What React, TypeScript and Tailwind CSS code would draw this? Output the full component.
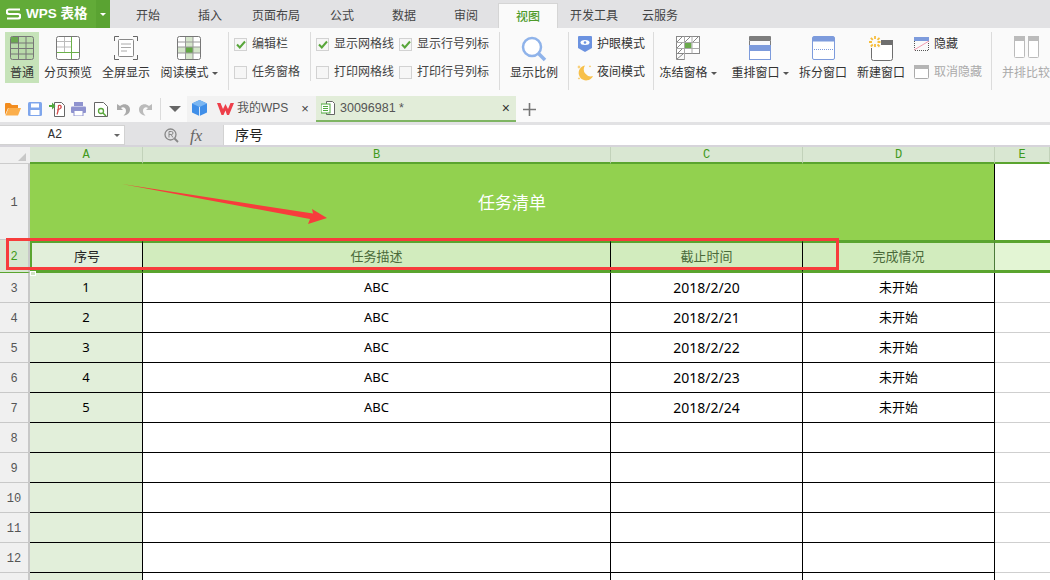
import React from "react";

const CJK = "font-['Liberation_Sans','Noto_Sans_CJK_SC',sans-serif]";

function S({ w, h, children, className = "" }: { w: number; h: number; children: React.ReactNode; className?: string }) {
  return (
    <svg width={w} height={h} viewBox={`0 0 ${w} ${h}`} className={`block shrink-0 ${className}`} fill="none">
      {children}
    </svg>
  );
}

const Caret = ({ c = "#555" }: { c?: string }) => (
  <svg width="6" height="3" viewBox="0 0 6 3" className="inline-block ml-[3px] align-middle"><path d="M0 0h6L3 3z" fill={c} /></svg>
);

function IconNormal() {
  return (
    <S w={24} h={24}>
      <rect x=".5" y=".5" width="23" height="23" rx="2" fill="#b9dbaa" stroke="#777" />
      <rect x="1" y="1" width="8" height="6" fill="#6aa84f" />
      <path d="M8.5 1v22M16 1v22M1 7h22M1 12.5h22M1 18h22" stroke="#777" />
    </S>
  );
}
function IconPage() {
  return (
    <S w={24} h={24}>
      <rect x=".5" y=".5" width="23" height="23" rx="2" fill="#fff" stroke="#777" />
      <path d="M8.5 1v15M1 5.5h15M1 11h15" stroke="#bbb" />
      <path d="M15.5 1v22M1 16.5h22" stroke="#6bb04a" />
    </S>
  );
}
function IconFull() {
  return (
    <S w={24} h={24}>
      <path d="M.5 5V.5H5M19 .5h4.500V5M23.500 19v4.500H19M5 23.500H.5V19" stroke="#666" />
      <rect x="4.500" y="3.500" width="15" height="17" rx="1" stroke="#888" fill="#fff" />
      <path d="M7 8h10M7 11.500h10M7 15h6" stroke="#aaa" />
    </S>
  );
}
function IconRead() {
  return (
    <S w={24} h={24}>
      <rect x=".5" y=".5" width="23" height="23" rx="2" fill="#fff" stroke="#777" />
      <rect x="8" y="1" width="8" height="22" fill="#d5e6cb" />
      <rect x="1" y="11" width="22" height="6" fill="#d5e6cb" />
      <rect x="8.500" y="11" width="7.500" height="6" fill="#62a744" />
      <path d="M8.500 1v22M16 1v22M1 6h22M1 11h22M1 17h22" stroke="#999" />
    </S>
  );
}
function Check({ on }: { on?: boolean }) {
  return (
    <span className="w-[13px] h-[13px] border border-[#d2d2d2] bg-[#f6f6f6] shrink-0 flex items-center justify-center">
      {on && (
        <svg width="10" height="9" viewBox="0 0 10 9"><path d="M1 4.500L3.800 7.500L9 1.500" stroke="#58a63a" strokeWidth="2" fill="none" /></svg>
      )}
    </span>
  );
}
function IconZoom() {
  return (
    <S w={26} h={26}>
      <circle cx="11" cy="11" r="9" stroke="#8fb3ea" strokeWidth="2.500" fill="#fff" />
      <path d="M17.500 17.500L24 24" stroke="#8fb3ea" strokeWidth="3.500" />
    </S>
  );
}
function IconEye() {
  return (
    <S w={14} h={16}>
      <path d="M1 0h12a1 1 0 011 1v11l-7 4-7-4V1a1 1 0 011-1z" fill="#6b92e0" />
      <ellipse cx="7" cy="6.500" rx="4.500" ry="2.500" fill="#fff" />
      <circle cx="7" cy="6.500" r="1.300" fill="#6b92e0" />
    </S>
  );
}
function IconMoon() {
  return (
    <S w={16} h={17}>
      <path d="M8 1.500a7.500 7.500 0 108 10.500 7 7 0 01-8-10.500z" fill="#f7c04a" />
      <path d="M2 1l.6 1.400L4 3l-1.400.6L2 5l-.6-1.400L0 3l1.400-.6zM2 13l.4 1 1 .4-1 .4-.4 1-.4-1-1-.4 1-.4zM13 1l.4.900.9.400-.9.400-.4.900-.4-.9-.9-.4.900-.4z" fill="#f7c04a" />
    </S>
  );
}
function IconFreeze() {
  return (
    <S w={24} h={24}>
      <rect x=".5" y=".5" width="23" height="17" fill="#fff" stroke="#888" />
      <path d="M23.500.5v17H8.500v6h-8V.5" stroke="#888" />
      <rect x="8.500" y="6.500" width="7" height="6" fill="#6aaa4c" />
      <path d="M.5 6.500h23M.5 12.500h23M8.500.5v23M16 .5v17" stroke="#aaa" />
      <path d="M1 6L6 1M9 6l5-5M17 6l5-5M1 12l5-5M1 18l5-5M1 23l6-5" stroke="#888" />
    </S>
  );
}
function IconArrange() {
  return (
    <S w={22} h={24}>
      <rect x="0" y="0" width="22" height="5" rx="1" fill="#7d7d7d" />
      <path d="M.5 5v4M21.500 5v4" stroke="#7d7d7d" />
      <rect x=".5" y="9.500" width="21" height="14" fill="#fff" stroke="#7d9bdc" />
      <rect x="1" y="10" width="20" height="5" fill="#7d9bdc" />
    </S>
  );
}
function IconSplit() {
  return (
    <S w={23} h={24}>
      <rect x=".5" y=".5" width="22" height="23" rx="1.500" fill="#fff" stroke="#7d9bdc" />
      <rect x="1" y="1" width="21" height="4.500" fill="#7d9bdc" />
      <path d="M2 13.500h19" stroke="#7d9bdc" strokeDasharray="1 1" />
    </S>
  );
}
function IconNew() {
  return (
    <S w={24} h={25}>
      <rect x="2.500" y="4.500" width="21" height="20" rx="2" fill="#fff" stroke="#6e6e6e" />
      <rect x="12" y="4" width="12" height="5" fill="#6e6e6e" />
      <rect x="0" y="0" width="12" height="12" fill="#fafafa" />
      <path d="M6 0v3M6 8v3M0 6h3M8.500 6h3M1.800 1.800l2 2M8.500 8.500l2 2M10.500 1.800l-2 2M3.800 8.500l-2 2" stroke="#f6bd3c" strokeWidth="1.800" />
    </S>
  );
}
function IconHide() {
  return (
    <S w={15} h={14}>
      <path d="M.5 4v9.500h14V4" stroke="#555" strokeDasharray="1 1" />
      <rect x="0" y="0" width="15" height="4" fill="#7d9bdc" />
      <path d="M0 13L15 4" stroke="#f29bb0" />
    </S>
  );
}
function IconUnhide() {
  return (
    <S w={15} h={14}>
      <rect x=".5" y=".5" width="14" height="13" rx="1" fill="#fff" stroke="#aaa" />
      <rect x="0" y="0" width="15" height="4" fill="#b5b5b5" />
    </S>
  );
}
function IconCompare() {
  return (
    <S w={25} h={22}>
      <rect x=".5" y=".5" width="10" height="21" rx="1" fill="#fff" stroke="#bbb" />
      <rect x="14.500" y=".5" width="10" height="21" rx="1" fill="#fff" stroke="#bbb" />
      <rect x="0" y="0" width="11" height="5" fill="#bbb" />
      <rect x="14" y="0" width="11" height="5" fill="#bbb" />
    </S>
  );
}

function BigBtn({ w, icon, label, caret, active, muted }: { w: number; icon: React.ReactNode; label: string; caret?: boolean; active?: boolean; muted?: boolean }) {
  return (
    <div style={{ width: w }} className={`shrink-0 h-[51px] flex flex-col items-center whitespace-nowrap pt-[4px] ${active ? "bg-[#c6e3b9]" : ""}`}>
      <div className="h-[26px] flex items-start justify-center">{icon}</div>
      <div className={`mt-[3px] text-[12px] leading-[16px] ${muted ? "text-[#aaa]" : "text-[#333]"}`}>
        {label}
        {caret && <Caret />}
      </div>
    </div>
  );
}
const Sep = ({ ml = 0, mr = 0 }: { ml?: number; mr?: number }) => (
  <div style={{ marginLeft: ml, marginRight: mr }} className="w-[1px] h-[58px] bg-[#dcdcdc] shrink-0" />
);
function CheckItem({ on, label }: { on?: boolean; label: string }) {
  return (
    <div className="flex items-center gap-[5px] h-[16px] text-[12px] leading-[16px] text-[#444] whitespace-nowrap">
      <Check on={on} />
      <span>{label}</span>
    </div>
  );
}
function SmallItem({ icon, label, muted }: { icon: React.ReactNode; label: string; muted?: boolean }) {
  return (
    <div className={`flex items-center h-[16px] text-[12px] leading-[16px] whitespace-nowrap ${muted ? "text-[#aaa]" : "text-[#333]"}`}>
      <div className="w-[15px] flex justify-center shrink-0">{icon}</div>
      <span className="ml-[5px]">{label}</span>
    </div>
  );
}

function TitleBar() {
  return (
    <div className="h-[28px] flex bg-[#e2e2e4] items-stretch">
      <div className="w-[96px] bg-[#62ab38] flex items-center pl-[6px] text-white gap-[5px] font-bold whitespace-nowrap">
        <svg width="15" height="12" viewBox="0 0 15 12" className="shrink-0"><path d="M14 1.500H3a1.700 1.700 0 000 4.500h9a1.700 1.700 0 010 4.500H1" stroke="#fff" strokeWidth="2.200" fill="none" /></svg>
        <span className="text-[13.500px] leading-[16px]">WPS 表格</span>
      </div>
      <div className="w-[14px] bg-[#5aa332] flex items-center justify-center">
        <svg width="6" height="3" viewBox="0 0 6 3"><path d="M0 0h6L3 3z" fill="#fff" /></svg>
      </div>
      <div className="flex items-center text-[12px] text-[#444] ml-[26px] pt-[4px]">
        <span className="w-[24px] whitespace-nowrap">开始</span>
        <span className="w-[24px] ml-[38px] whitespace-nowrap">插入</span>
        <span className="w-[48px] ml-[30px] whitespace-nowrap">页面布局</span>
        <span className="w-[24px] ml-[30px] whitespace-nowrap">公式</span>
        <span className="w-[24px] ml-[38px] whitespace-nowrap">数据</span>
        <span className="w-[24px] ml-[38px] whitespace-nowrap">审阅</span>
      </div>
      <div className="w-[60px] ml-[20px] mt-[3px] pt-[2px] bg-[#fafafa] border-x border-t border-[#d5d5d5] flex items-center justify-center text-[12px] font-medium text-[#4e9a2a]">视图</div>
      <div className="flex items-center text-[12px] text-[#444] ml-[12px] pt-[4px] whitespace-nowrap">
        <span className="w-[48px]">开发工具</span>
        <span className="w-[36px] ml-[24px]">云服务</span>
      </div>
    </div>
  );
}

function Ribbon() {
  return (
    <div className="h-[68px] bg-[#fafafa] flex items-start pt-[4px] pl-[5px] overflow-hidden">
      <BigBtn w={34} active icon={<IconNormal />} label="普通" />
      <BigBtn w={58} icon={<IconPage />} label="分页预览" />
      <BigBtn w={58} icon={<IconFull />} label="全屏显示" />
      <BigBtn w={68} icon={<IconRead />} label="阅读模式" caret />
      <Sep ml={5} />
      <div className="w-[81px] shrink-0 flex flex-col gap-[12px] pl-[5px] pt-[4px]">
        <CheckItem on label="编辑栏" />
        <CheckItem label="任务窗格" />
      </div>
      <div className="w-[1px] h-[49px] bg-[#dcdcdc] shrink-0" />
      <div className="w-[88px] shrink-0 flex flex-col gap-[12px] pl-[5px] pt-[4px]">
        <CheckItem on label="显示网格线" />
        <CheckItem label="打印网格线" />
      </div>
      <div className="w-[100px] shrink-0 flex flex-col gap-[12px] pt-[4px]">
        <CheckItem on label="显示行号列标" />
        <CheckItem label="打印行号列标" />
      </div>
      <Sep />
      <BigBtn w={68} icon={<IconZoom />} label="显示比例" />
      <Sep />
      <div className="w-[84px] shrink-0 flex flex-col gap-[12px] pt-[4px] pl-[8px]">
        <SmallItem icon={<IconEye />} label="护眼模式" />
        <SmallItem icon={<IconMoon />} label="夜间模式" />
      </div>
      <Sep />
      <BigBtn w={68} icon={<IconFreeze />} label="冻结窗格" caret />
      <BigBtn w={76} icon={<IconArrange />} label="重排窗口" caret />
      <BigBtn w={50} icon={<IconSplit />} label="拆分窗口" />
      <BigBtn w={66} icon={<IconNew />} label="新建窗口" />
      <div className="w-[77px] shrink-0 flex flex-col gap-[12px] pt-[4px]">
        <SmallItem icon={<IconHide />} label="隐藏" />
        <SmallItem muted icon={<IconUnhide />} label="取消隐藏" />
      </div>
      <Sep />
      <BigBtn w={68} muted icon={<IconCompare />} label="并排比较" />
    </div>
  );
}

function ToolIcons() {
  return (
    <div className="w-[187px] shrink-0 flex items-center h-full pl-[5px]">
      <S w={16} h={14} className="mr-[7px]">
        <path d="M0 2a1 1 0 011-1h4l2 2h6v3H3L0 13z" fill="#f28c1e" />
        <path d="M3.500 6H16l-3 7.500H.5z" fill="#fbae4b" />
      </S>
      <S w={14} h={14} className="mr-[7px]">
        <rect x="0" y="0" width="14" height="14" rx="1.500" fill="#7fa6ec" />
        <rect x="3" y="1.500" width="8" height="4" fill="#fff" />
        <rect x="2.500" y="8" width="9" height="5" fill="#fff" />
      </S>
      <S w={16} h={15} className="mr-[6px]">
        <path d="M5.500.5h7l3 3v11h-10z" fill="#fff" stroke="#666" />
        <path d="M8 12.500C9.500 9 9.500 6 9.500 3.500c2.500-1 4 2 1 3.500L8 8" stroke="#d34a4a" strokeWidth="1.200" />
        <path d="M0 3h3V.5L6.500 4 3 7.500V5H0z" fill="#4fa83d" />
      </S>
      <S w={15} h={14} className="mr-[8px]">
        <rect x="3" y="0" width="9" height="4" fill="#8f93cf" />
        <rect x="0" y="4.500" width="15" height="6.500" rx="1" fill="#8f93cf" />
        <rect x="3" y="8.500" width="9" height="5.500" fill="#fff" stroke="#8f93cf" />
      </S>
      <S w={14} h={15} className="mr-[9px]">
        <path d="M.5.5h9l4 4v10H.5z" fill="#fff" stroke="#666" />
        <circle cx="7" cy="9" r="2.500" stroke="#58a63a" strokeWidth="1.300" />
        <path d="M9 11l3 3" stroke="#58a63a" strokeWidth="1.500" />
      </S>
      <S w={13} h={13} className="mr-[9px]">
        <path d="M0 1v6h6L4 5c2-1.500 5-.5 5 3 0 1.500-1 3.500-2.500 4.500C10 12.500 13 10 13 6.500 13 2 7.500-.5 3 3z" fill="#aaa" />
      </S>
      <S w={13} h={13} className="mr-[8px]">
        <path d="M13 1v6H7l2-2C7 3.500 4 4.500 4 8c0 1.500 1 3.500 2.500 4.500C3 12.500 0 10 0 6.500 0 2 5.500-.5 10 3z" fill="#bbb" />
      </S>
      <div className="w-[1px] h-[22px] bg-[#dcdcdc] mr-[8px]" />
      <svg width="12" height="6" viewBox="0 0 12 6"><path d="M0 0h12L6 6z" fill="#666" /></svg>
    </div>
  );
}

function TabRow() {
  return (
    <div className="h-[26px] bg-[#fafafa] flex items-stretch text-[12px] whitespace-nowrap">
      <ToolIcons />
      <div className="w-[129px] shrink-0 bg-[#f2f2f2] flex items-center pl-[5px] pb-[2px] relative">
        <S w={15} h={16}>
          <path d="M7.500 0L15 3.500v9L7.500 16 0 12.500v-9z" fill="#3f8ee8" />
          <path d="M7.500 0L15 3.500 7.500 7 0 3.500z" fill="#7ab6f2" />
          <path d="M7.500 7v9" stroke="#fff" strokeWidth=".8" />
        </S>
        <S w={17} h={13} className="ml-[10px]">
          <path d="M0 1h3.500L6 7l2.500-5L11 7l2.500-6H17l-5 12h-2L8.500 8.500 6.500 13h-2z" fill="#ee3f4a" />
        </S>
        <span className="ml-[3px] text-[#555]">我的WPS</span>
        <span className="ml-[13px] text-[#444] text-[13px] leading-none">×</span>
      </div>
      <div className="w-[200px] shrink-0 bg-[#e2edd9] border-b-[2px] border-[#7fb563] flex items-center pl-[5px] pr-[6px]">
        <S w={14} h={14}>
          <path d="M5.500.5h6l2 2v11h-8z" fill="#fff" stroke="#666" />
          <rect x="0" y="3" width="9" height="9" fill="#fff" stroke="#4fa83d" />
          <path d="M2 5.500h5M2 7.500h5M2 9.500h5" stroke="#4fa83d" />
        </S>
        <span className="ml-[5px] text-[#555] text-[12.500px] font-['Liberation_Sans']">30096981 *</span>
        <span className="ml-auto text-[#333] text-[14px] leading-none">×</span>
      </div>
      <div className="ml-[7px] flex items-center">
        <svg width="13" height="13" viewBox="0 0 13 13"><path d="M6.500 0v13M0 6.500h13" stroke="#777" strokeWidth="1.600" /></svg>
      </div>
    </div>
  );
}

function FormulaBar() {
  return (
    <div className="h-[23px] bg-[#e2e2e4] pt-[1px] border-b-[2px] border-[#d6d4da] flex items-start">
      <div className="w-[125px] h-[20px] bg-white border border-l-0 border-[#d2d2d2] flex items-center relative">
        <span className="w-full text-center pr-[14px] text-[12px] font-['Liberation_Mono'] text-[#333]">A2</span>
        <svg width="6" height="3" viewBox="0 0 6 3" className="absolute right-[4px] top-[8px]"><path d="M0 0h6L3 3z" fill="#666" /></svg>
      </div>
      <div className="w-[98px] h-[20px] flex items-center pl-[39px]">
        <S w={15} h={15}>
          <circle cx="6.500" cy="6.500" r="5.500" stroke="#888" strokeWidth="1.300" />
          <path d="M10.500 10.500L14 14" stroke="#888" strokeWidth="1.800" />
          <path d="M5 9.500V3.500h2.500a1.500 1.500 0 010 3H5M7 6.500L9 9.500" stroke="#888" />
        </S>
        <span className="ml-[11px] font-['Liberation_Serif'] italic text-[#666] text-[17px] leading-none">fx</span>
      </div>
      <div className="flex-1 h-[20px] bg-white border-l border-[#d2d2d2] pl-[11px] text-[14px] leading-[20px] text-[#222]">序号</div>
    </div>
  );
}

const COLS = "grid grid-cols-[30px_113px_468px_192px_192px_1fr]";

function ColHead() {
  const cols = ["A", "B", "C", "D", "E"];
  return (
    <div className={`${COLS} h-[17px]`}>
      <div className="bg-[#f0f0f0] border-b border-[#ccc] relative">
        <svg width="8" height="8" viewBox="0 0 8 8" className="absolute right-[4px] bottom-[2px]"><path d="M8 0v8H0z" fill="#c8c8c8" /></svg>
      </div>
      {cols.map((c) => (
        <div key={c} className="bg-[#d9e7d2] border-r border-[#c2d2ba] border-b-[2px] border-b-[#5aa42f] text-center text-[12px] leading-[16px] font-['Liberation_Mono'] text-[#3f9a1c] overflow-hidden">
          {c}
        </div>
      ))}
    </div>
  );
}

function RowHead({ n, sel }: { n?: number; sel?: boolean }) {
  return (
    <div className={`flex items-center justify-center pt-[2px] border-r-2 border-b border-r-[#c8c8c8] text-[12px] font-['Liberation_Mono'] ${sel ? "bg-[#d9e7d2] text-[#3f9a1c] border-b-[#5aa42f]" : "bg-[#f0f0f0] text-[#555] border-b-[#c8c8c8]"}`}>
      {n}
    </div>
  );
}

function Row({ n, cells }: { n?: number; cells?: [string, string, string, string] }) {
  const base = "border-b border-r border-black flex items-center justify-center text-black font-['Noto_Sans','Noto_Sans_CJK_SC',sans-serif]";
  return (
    <div className={`${COLS} h-[30px] overflow-hidden`}>
      <RowHead n={n} />
      <div className={`${base} bg-[#e2efda] text-[13px]`}>{cells?.[0]}</div>
      <div className={`${base} text-[13px]`}>{cells?.[1]}</div>
      <div className={`${base} text-[14px]`}>{cells?.[2]}</div>
      <div className={`${base} text-[13px]`}>{cells?.[3]}</div>
      <div className="border-b border-[#cfcfcf]" />
    </div>
  );
}

function Sheet() {
  const data: [string, string, string, string][] = [
    ["1", "ABC", "2018/2/20", "未开始"],
    ["2", "ABC", "2018/2/21", "未开始"],
    ["3", "ABC", "2018/2/22", "未开始"],
    ["4", "ABC", "2018/2/23", "未开始"],
    ["5", "ABC", "2018/2/24", "未开始"],
  ];
  return (
    <div className="relative">
      <ColHead />
      <div className="grid grid-cols-[30px_965px_1fr] h-[76px]">
        <RowHead n={1} />
        <div className="bg-[#92d14f] border-r border-black flex items-center justify-center pt-[3px] text-white text-[17px]">任务清单</div>
        <div className="bg-white" />
      </div>
      <div className={`${COLS} h-[33px]`}>
        <RowHead n={2} sel />
        <div className="bg-[#e2efda] border-y-[3px] border-l-2 border-r border-[#5aa42f] border-r-black flex items-center justify-center pt-[1px] text-[13px] text-[#222]">序号</div>
        <div className="bg-[#d2ecbe] border-y-[3px] border-[#5aa42f] border-r border-r-black flex items-center justify-center pt-[1px] text-[13px] text-[#4a6a3a]">任务描述</div>
        <div className="bg-[#d2ecbe] border-y-[3px] border-[#5aa42f] border-r border-r-black flex items-center justify-center pt-[1px] text-[13px] text-[#4a6a3a]">截止时间</div>
        <div className="bg-[#d2ecbe] border-y-[3px] border-[#5aa42f] border-r border-r-[#4c7a3a] flex items-center justify-center pt-[1px] text-[13px] text-[#4a6a3a]">完成情况</div>
        <div className="bg-[#e3f5d4] border-y-[3px] border-[#5aa42f]" />
      </div>
      {data.map((c, i) => (
        <Row key={i} n={i + 3} cells={c} />
      ))}
      {[8, 9, 10, 11, 12].map((n) => (
        <Row key={n} n={n} />
      ))}
      <Row />
      {/* fill handle */}
      <div className="absolute left-[30px] top-[124px] w-[6px] h-[5px] bg-[#cfe3c2] border border-white" />
      {/* annotation rectangle */}
      <div className="absolute left-[6px] top-[91px] w-[833px] h-[32px] border-[3px] border-[#f73c3c] pointer-events-none" />
      {/* annotation arrow */}
      <svg width="220" height="50" viewBox="0 0 220 50" className="absolute left-[120px] top-[33px] pointer-events-none">
        <path d="M2 4 L193 33.500 L192 29 L207 38 L188 44 L190 39 Z" fill="#f73c3c" />
      </svg>
    </div>
  );
}

export default function App() {
  return (
    <div className={`w-[1050px] h-[580px] overflow-hidden bg-white ${CJK}`}>
      <TitleBar />
      <Ribbon />
      <TabRow />
      <div className="h-[2px] bg-[#e2e2e4]" />
      <FormulaBar />
      <Sheet />
    </div>
  );
}
